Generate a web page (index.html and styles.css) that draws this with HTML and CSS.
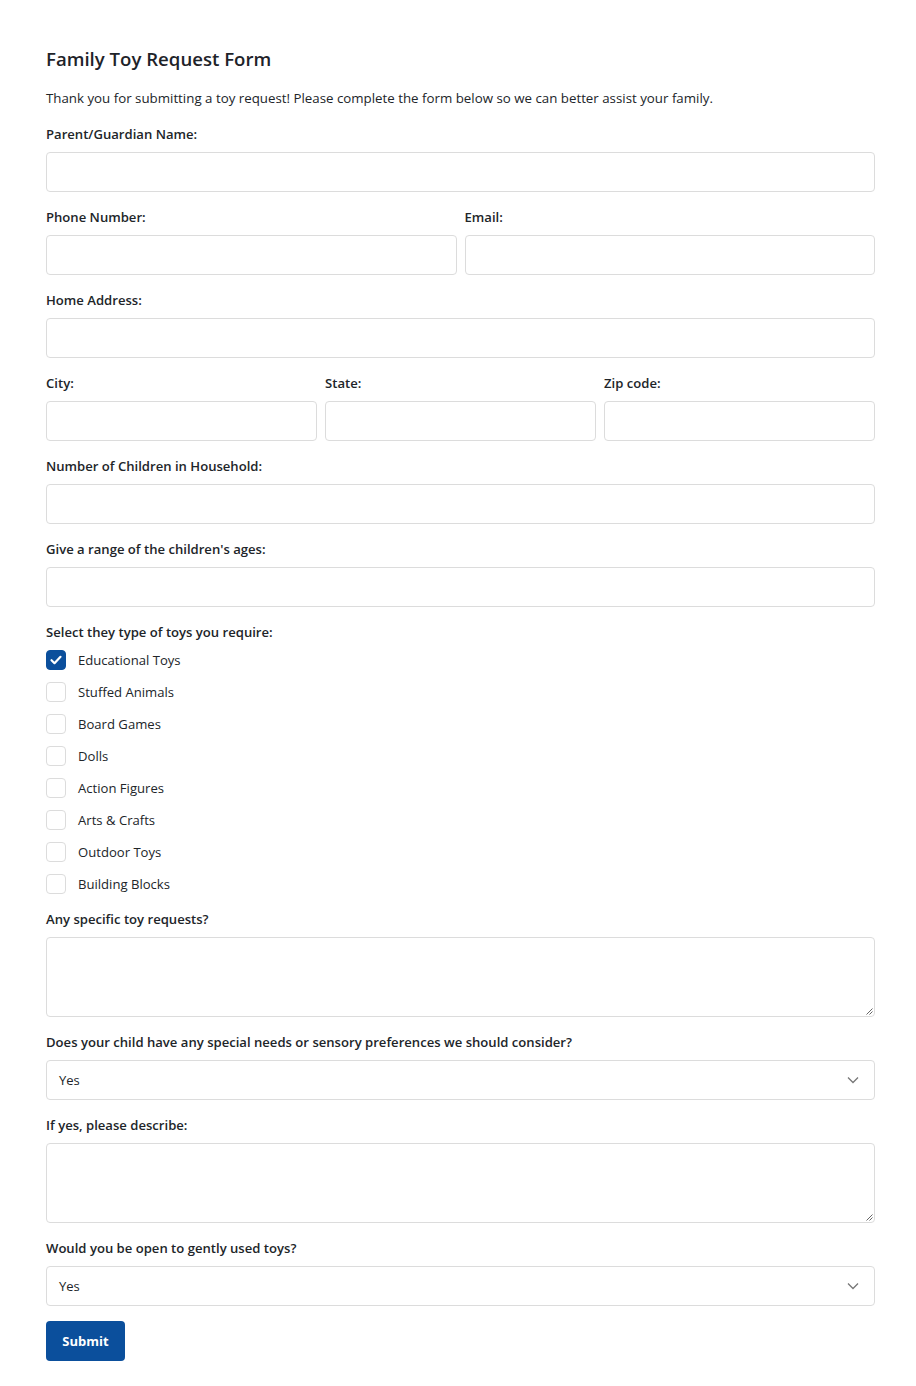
FILE: index.html
```html
<!DOCTYPE html>
<html lang="en">
<head>
<meta charset="utf-8">
<title>Family Toy Request Form</title>
<link rel="stylesheet" href="styles.css">
</head>
<body>
<main class="page">
  <h1 class="title">Family Toy Request Form</h1>
  <p class="intro">Thank you for submitting a toy request! Please complete the form below so we can better assist your family.</p>
  <form class="form">
    <div class="group">
      <label class="label">Parent/Guardian Name:</label>
      <div class="input"></div>
    </div>
    <div class="row two">
      <div class="group">
        <label class="label">Phone Number:</label>
        <div class="input"></div>
      </div>
      <div class="group">
        <label class="label">Email:</label>
        <div class="input"></div>
      </div>
    </div>
    <div class="group">
      <label class="label">Home Address:</label>
      <div class="input"></div>
    </div>
    <div class="row three">
      <div class="group">
        <label class="label">City:</label>
        <div class="input"></div>
      </div>
      <div class="group">
        <label class="label">State:</label>
        <div class="input"></div>
      </div>
      <div class="group">
        <label class="label">Zip code:</label>
        <div class="input"></div>
      </div>
    </div>
    <div class="group">
      <label class="label">Number of Children in Household:</label>
      <div class="input"></div>
    </div>
    <div class="group">
      <label class="label">Give a range of the children's ages:</label>
      <div class="input"></div>
    </div>
    <div class="group">
      <label class="label">Select they type of toys you require:</label>
      <div class="checks">
        <div class="check"><span class="box checked"><svg viewBox="0 0 20 20" width="20" height="20"><path d="M5.5 10.2l3 3 6-6.4" fill="none" stroke="#fff" stroke-width="2.2" stroke-linecap="round" stroke-linejoin="round"/></svg></span><span class="ctext">Educational Toys</span></div>
        <div class="check"><span class="box"></span><span class="ctext">Stuffed Animals</span></div>
        <div class="check"><span class="box"></span><span class="ctext">Board Games</span></div>
        <div class="check"><span class="box"></span><span class="ctext">Dolls</span></div>
        <div class="check"><span class="box"></span><span class="ctext">Action Figures</span></div>
        <div class="check"><span class="box"></span><span class="ctext">Arts &amp; Crafts</span></div>
        <div class="check"><span class="box"></span><span class="ctext">Outdoor Toys</span></div>
        <div class="check"><span class="box"></span><span class="ctext">Building Blocks</span></div>
      </div>
    </div>
    <div class="group">
      <label class="label">Any specific toy requests?</label>
      <div class="input textarea"><svg class="grip" viewBox="0 0 8 8" width="8" height="8"><path d="M7.5 1.5L1.5 7.5M7.5 4.5L4.5 7.5" stroke="#555" stroke-width="0.9" fill="none"/></svg></div>
    </div>
    <div class="group">
      <label class="label">Does your child have any special needs or sensory preferences we should consider?</label>
      <div class="input select"><span class="sel-text">Yes</span><svg class="chev" viewBox="0 0 12 8" width="12" height="8"><path d="M1 1.5l5 5 5-5" fill="none" stroke="#777" stroke-width="1.3"/></svg></div>
    </div>
    <div class="group">
      <label class="label">If yes, please describe:</label>
      <div class="input textarea"><svg class="grip" viewBox="0 0 8 8" width="8" height="8"><path d="M7.5 1.5L1.5 7.5M7.5 4.5L4.5 7.5" stroke="#555" stroke-width="0.9" fill="none"/></svg></div>
    </div>
    <div class="group last">
      <label class="label">Would you be open to gently used toys?</label>
      <div class="input select"><span class="sel-text">Yes</span><svg class="chev" viewBox="0 0 12 8" width="12" height="8"><path d="M1 1.5l5 5 5-5" fill="none" stroke="#777" stroke-width="1.3"/></svg></div>
    </div>
    <button type="button" class="submit">Submit</button>
  </form>
</main>
</body>
</html>
```
FILE: styles.css
```css
* { box-sizing: border-box; }
body {
  margin: 0;
  background: #fff;
  color: #212529;
  font-family: "Open Sans", "Noto Sans", sans-serif;
}
.page {
  padding: 47px 41px 20px 46px;
}
.title {
  margin: 0 0 17px;
  font-size: 18.6px;
  line-height: 24px;
  font-weight: 600;
  color: #1e2329;
}
.intro {
  margin: 0 0 16px;
  font-size: 13.3px;
  line-height: 20px;
}
.form { display: flex; flex-direction: column; }
.group { display: flex; flex-direction: column; margin-bottom: 15px; }
.group.last { margin-bottom: 15px; }
.row { display: grid; gap: 8px; }
.row.two { grid-template-columns: 1fr 1fr; }
.row.three { grid-template-columns: 1fr 1fr 1fr; }
.label {
  font-size: 13.1px;
  line-height: 20px;
  font-weight: 600;
  margin-bottom: 8px;
}
.input {
  height: 40px;
  border: 1px solid #dcdcdc;
  border-radius: 4px;
  background: #fff;
  position: relative;
}
.textarea { height: 80px; }
.grip { position: absolute; right: 1px; bottom: 1px; }
.select {
  display: flex;
  align-items: center;
  justify-content: space-between;
  padding: 0 15px 0 12px;
}
.sel-text { font-size: 13px; }
.checks { display: flex; flex-direction: column; gap: 12px; padding-top: 0; }
.check { display: flex; align-items: center; gap: 12px; height: 20px; }
.box {
  width: 20px; height: 20px;
  border: 1px solid #dcdcdc;
  border-radius: 4px;
  display: inline-flex;
}
.box.checked { background: #0b4f9c; border-color: #0b4f9c; }
.box.checked svg { margin: -1px; }
.ctext { font-size: 13.1px; line-height: 20px; }
.submit {
  align-self: flex-start;
  height: 40px;
  width: 79px;
  border: 0;
  border-radius: 4px;
  background: #0b4f9c;
  color: #fff;
  font-family: inherit;
  font-size: 13px;
  font-weight: 700;
  padding: 0;
}
```
